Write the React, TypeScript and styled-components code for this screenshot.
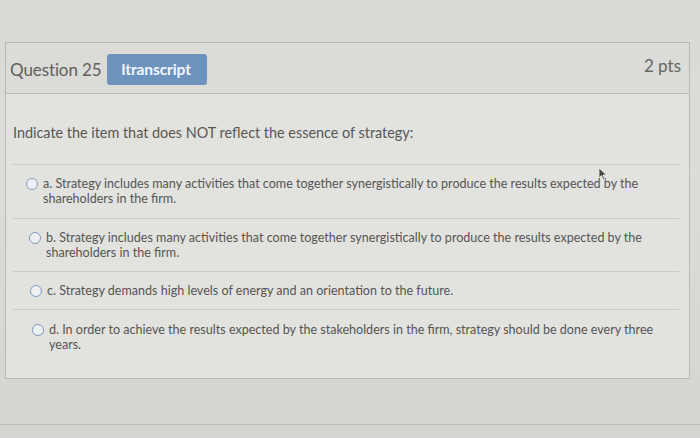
import React from "react";
import styled, { createGlobalStyle } from "styled-components";

const Global = createGlobalStyle`
  html, body { margin: 0; padding: 0; }
  body {
    width: 700px;
    height: 438px;
    overflow: hidden;
    background: #d6d6d1;
    font-family: Lato, "Open Sans", "Liberation Sans", sans-serif;
  }
`;

const Page = styled.div`
  width: 700px;
  height: 438px;
  box-sizing: border-box;
  padding: 42px 10px 0 5px;
  background: linear-gradient(180deg, #d9d9d5 0%, #dcdcd8 40%, #d5d5d0 100%);
  position: relative;
`;

const Box = styled.div`
  border: 1px solid #b9b9b4;
  background: #e2e2de;
  height: 337px;
  box-sizing: border-box;
  display: flex;
  flex-direction: column;
`;

const Header = styled.div`
  height: 51px;
  box-sizing: border-box;
  display: flex;
  align-items: center;
  padding: 2px 8px 0 4px;
  background: #dbdbd7;
  border-bottom: 1px solid #bdbdb8;
`;

const Title = styled.span`
  font-size: 17px;
  color: #606060;
  letter-spacing: -0.1px;
`;

const Badge = styled.span`
  margin-left: 5px;
  background: #6d92bd;
  color: #f4f6f8;
  font-weight: 700;
  font-size: 15.5px;
  border-radius: 3px;
  padding: 6px 16px 7px 15px;
  letter-spacing: -0.1px;
`;

const Points = styled.span`
  margin-left: auto;
  margin-top: -8px;
  font-size: 17px;
  color: #666;
`;

const Body = styled.div`
  padding: 30px 10px 0 7px;
`;

const Prompt = styled.div`
  font-size: 14.4px;
  color: #585858;
  padding-bottom: 23px;
  border-bottom: 1px solid #c9c9c4;
`;

const Option = styled.label<{ $pad: string }>`
  display: flex;
  align-items: flex-start;
  gap: 5px;
  padding: ${(p) => p.$pad};
  border-bottom: 1px solid #cbcbc6;
  &:last-child { border-bottom: none; }
`;

const Radio = styled.span`
  flex: none;
  width: 10px;
  height: 10px;
  border-radius: 50%;
  border: 1.2px solid #7d9bc0;
  background: #eef0f1;
  margin-top: 2px;
`;

const OptionText = styled.span`
  font-size: 12.55px;
  line-height: 15px;
  color: #555;
  max-width: 625px;
`;

const FloorLine = styled.div`
  position: absolute;
  left: 0;
  right: 0;
  top: 424px;
  border-top: 1px solid #bdbdb8;
`;

const Cursor = styled.svg`
  position: absolute;
  left: 598px;
  top: 167px;
`;

const options = [
  { t: "a. Strategy includes many activities that come together synergistically to produce the results expected by the shareholders in the firm.", pad: "11px 0 12px 13px" },
  { t: "b. Strategy includes many activities that come together synergistically to produce the results expected by the shareholders in the firm.", pad: "11px 0 11px 16px" },
  { t: "c. Strategy demands high levels of energy and an orientation to the future.", pad: "11px 0 11px 17px" },
  { t: "d. In order to achieve the results expected by the stakeholders in the firm, strategy should be done every three years.", pad: "12px 0 12px 19px" },
];

export default function App() {
  return (
    <>
      <Global />
      <Page>
        <Box>
          <Header>
            <Title>Question 25</Title>
            <Badge>ltranscript</Badge>
            <Points>2 pts</Points>
          </Header>
          <Body>
            <Prompt>Indicate the item that does NOT reflect the essence of strategy:</Prompt>
            {options.map((o) => (
              <Option key={o.t} $pad={o.pad}>
                <Radio />
                <OptionText>{o.t}</OptionText>
              </Option>
            ))}
          </Body>
        </Box>
        <FloorLine />
        <Cursor width="10" height="14" viewBox="0 0 10 14">
          <path d="M1 1 L1 11 L3.5 8.5 L5.5 13 L7 12.3 L5 8 L8.5 8 Z" fill="#444" stroke="#eee" strokeWidth="0.8" />
        </Cursor>
      </Page>
    </>
  );
}
